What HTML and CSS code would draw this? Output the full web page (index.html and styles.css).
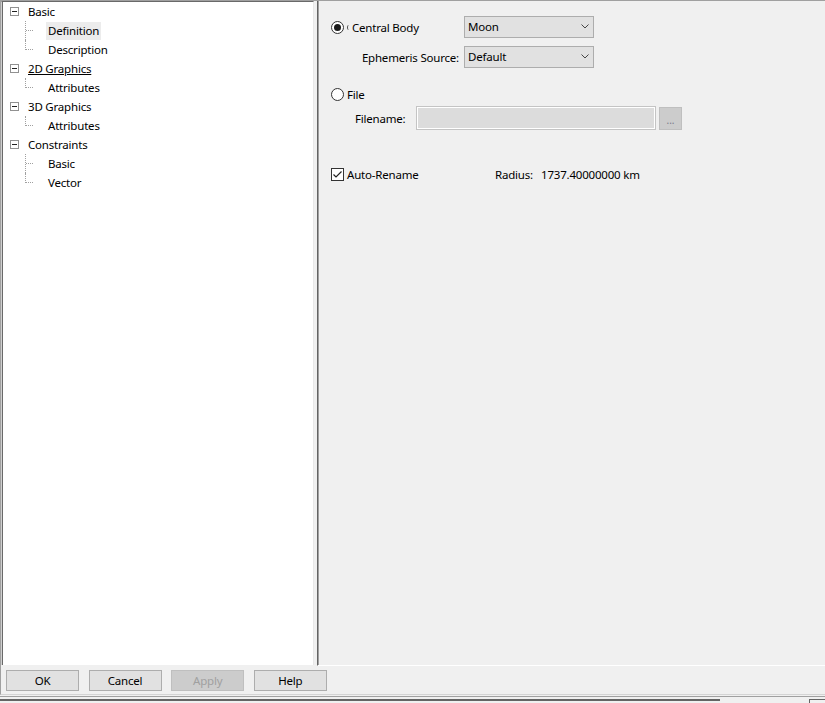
FILE: index.html
```html
<!DOCTYPE html>
<html lang="en">
<head>
   <meta charset="UTF-8">
   <meta name="viewport" content="width=device-width, initial-scale=1.0">
   <title>Properties</title>

   <link rel="stylesheet" href="styles.css">
</head>
<body>

<div class="window">
	<div class="main">
		<div class="tree">
			<ul class="tree-list">
				<li class="node">
					<div class="row"><span class="toggle"></span><span class="label">Basic</span></div>
					<ul class="children">
						<li class="leaf"><span class="label is-selected">Definition</span></li>
						<li class="leaf"><span class="label">Description</span></li>
					</ul>
				</li>
				<li class="node">
					<div class="row"><span class="toggle"></span><span class="label is-hover">2D Graphics</span></div>
					<ul class="children">
						<li class="leaf"><span class="label">Attributes</span></li>
					</ul>
				</li>
				<li class="node">
					<div class="row"><span class="toggle"></span><span class="label">3D Graphics</span></div>
					<ul class="children">
						<li class="leaf"><span class="label">Attributes</span></li>
					</ul>
				</li>
				<li class="node">
					<div class="row"><span class="toggle"></span><span class="label">Constraints</span></div>
					<ul class="children">
						<li class="leaf"><span class="label">Basic</span></li>
						<li class="leaf"><span class="label">Vector</span></li>
					</ul>
				</li>
			</ul>
		</div>

		<div class="page">
			<div class="body-grid">
				<label class="option">
					<span class="radio is-checked"></span><span class="focus-mark"></span>Central Body
				</label>
				<div class="select">
					<span>Moon</span>
					<svg class="chevron" width="8" height="5" viewBox="0 0 8 5"><polyline points="0.5,0.5 4,4 7.5,0.5" fill="none" stroke="#444" stroke-width="1"/></svg>
				</div>

				<span class="field-label">Ephemeris Source:</span>
				<div class="select">
					<span>Default</span>
					<svg class="chevron" width="8" height="5" viewBox="0 0 8 5"><polyline points="0.5,0.5 4,4 7.5,0.5" fill="none" stroke="#444" stroke-width="1"/></svg>
				</div>
			</div>

			<label class="option file-option">
				<span class="radio"></span>File
			</label>

			<div class="file-row">
				<span class="file-label">Filename:</span>
				<div class="text-input"></div>
				<div class="browse-btn">...</div>
			</div>

			<div class="rename-row">
				<label class="option check-option">
					<span class="checkbox">
						<svg width="11" height="11" viewBox="0 0 11 11"><polyline points="1.5,5.5 4,8 9.5,2.5" fill="none" stroke="#222" stroke-width="1.2"/></svg>
					</span>Auto-Rename
				</label>
				<span class="radius-label">Radius:</span>
				<span class="radius-value">1737.40000000 km</span>
			</div>
		</div>
	</div>

	<div class="buttons">
		<div class="btn">OK</div>
		<div class="btn">Cancel</div>
		<div class="btn is-disabled">Apply</div>
		<div class="btn">Help</div>
	</div>
</div>

<div class="taskbar">
	<div class="taskbar-left"></div>
	<div class="taskbar-mid"></div>
	<div class="taskbar-right"></div>
</div>

</body>
</html>
```

FILE: styles.css
```css
*,
::before,
::after {
    padding: 0;
    margin: 0;
    box-sizing: border-box;
}

html,
body {
    height: 100%;
    overflow: hidden;
    font-family: "Segoe UI", "Noto Sans", sans-serif;
    font-size: 11.5px;
    letter-spacing: -0.2px;
    color: #000;
    background-color: #f0f0f0;
}

li {
    list-style-type: none;
}

.window {
    height: 695px;
    border-left: 1px solid #a0a0a0;
    border-top: 1px solid #a0a0a0;
    border-bottom: 1px solid #d4d4d4;
}

.main {
    display: flex;
    height: 665px;
}

/* tree */
.tree {
    width: 313px;
    height: 664px;
    background: #fff;
    border-left: 1px solid #d0d0d0;
    border-top: 1px solid #696969;
    box-shadow: inset 1px 0 #696969;
    border-right: 1px solid #e8e8e8;
}

.tree-list {
    padding-left: 1px;
}

.row {
    display: flex;
    align-items: center;
    height: 19px;
    padding-left: 7px;
}

.toggle {
    position: relative;
    width: 9px;
    height: 9px;
    margin-right: 7px;
    border: 1px solid #919191;
    background: #fff;
}

.toggle::after {
    content: "";
    position: absolute;
    left: 1px;
    top: 3px;
    width: 5px;
    height: 1px;
    background: #222;
}

.label {
    padding: 0 2px;
    line-height: 18px;
    white-space: nowrap;
}

.label.is-selected {
    background: #ececec;
}

.label.is-hover {
    text-decoration: underline;
}

.leaf {
    position: relative;
    display: flex;
    align-items: center;
    height: 19px;
    padding-left: 43px;
}

.leaf::before {
    content: "";
    position: absolute;
    left: 22px;
    top: 0;
    bottom: 0;
    border-left: 1px dotted #a0a0a0;
}

.leaf:last-child::before {
    bottom: 9px;
}

.leaf::after {
    content: "";
    position: absolute;
    left: 23px;
    top: 9px;
    width: 7px;
    border-top: 1px dotted #a0a0a0;
}

/* page */
.page {
    flex-grow: 1;
    margin-left: 3px;
    height: 665px;
    border-left: 1px solid #646464;
    box-shadow: inset 1px 0 #a0a0a0;
    border-bottom: 1px solid #fff;
    padding: 15px 0 0 13px;
}

.body-grid {
    display: grid;
    grid-template-columns: 128px 130px;
    column-gap: 5px;
    row-gap: 8px;
}

.option {
    display: flex;
    align-items: center;
    height: 22px;
    white-space: nowrap;
}

.radio {
    position: relative;
    width: 13px;
    height: 13px;
    margin-right: 3px;
    border: 1px solid #333;
    border-radius: 50%;
    background: #fff;
}

.radio.is-checked::after {
    content: "";
    position: absolute;
    left: 2px;
    top: 2px;
    width: 7px;
    height: 7px;
    border-radius: 50%;
    background: #1a1a1a;
}

.focus-mark {
    width: 2px;
    height: 5px;
    margin-right: 3px;
    border-left: 1px solid #555;
    border-radius: 2px 0 0 2px;
}

.field-label {
    display: flex;
    align-items: center;
    justify-content: flex-end;
    height: 22px;
    padding-left: 31px;
    white-space: nowrap;
}

.select {
    display: flex;
    align-items: center;
    justify-content: space-between;
    height: 22px;
    padding: 0 4px 1px 3px;
    background: #e1e1e1;
    border: 1px solid #adadad;
}

.file-option {
    height: 14px;
    margin-top: 19px;
}

.file-row {
    display: flex;
    align-items: center;
    margin-top: 5px;
    padding-left: 24px;
}

.file-label {
    width: 61px;
}

.text-input {
    width: 240px;
    height: 24px;
    background: #dcdcdc;
    border: 1px solid #c4c4c4;
    box-shadow: inset 0 0 0 1px #fff;
}

.browse-btn {
    width: 23px;
    height: 23px;
    margin-left: 3px;
    text-align: center;
    line-height: 24px;
    font-size: 10px;
    letter-spacing: 0;
    color: #7a7a8a;
    background: #cccccc;
    border: 1px solid #bfbfbf;
}

.rename-row {
    display: flex;
    align-items: center;
    margin-top: 37px;
    height: 14px;
}

.check-option {
    width: 164px;
    height: 14px;
}

.checkbox {
    display: flex;
    align-items: center;
    justify-content: center;
    width: 13px;
    height: 13px;
    margin-right: 3px;
    border: 1px solid #333;
    background: #fff;
}

.radius-label {
    width: 46px;
}

/* buttons */
.buttons {
    display: flex;
    gap: 9.6px;
    padding: 4px 5px 0;
}

.btn {
    width: 73px;
    height: 21px;
    line-height: 19px;
    text-align: center;
    background: #e1e1e1;
    border: 1px solid #adadad;
}

.btn.is-disabled {
    color: #a0a0a0;
    background: #cccccc;
    border-color: #bfbfbf;
}

/* bottom edge */
.taskbar {
    display: flex;
    height: 8px;
    margin-top: 1px;
    border-top: 1px solid #a0a0a0;
}

.taskbar-left {
    width: 120px;
    margin-top: 2px;
    border-top: 2px solid #646464;
}

.taskbar-mid {
    width: 600px;
    margin-top: 2px;
    border-top: 2px solid #646464;
}

.taskbar-right {
    flex-grow: 1;
    margin-top: 2px;
    margin-left: 89px;
    border-left: 1px solid #646464;
    border-top: 1px solid #646464;
}
```
